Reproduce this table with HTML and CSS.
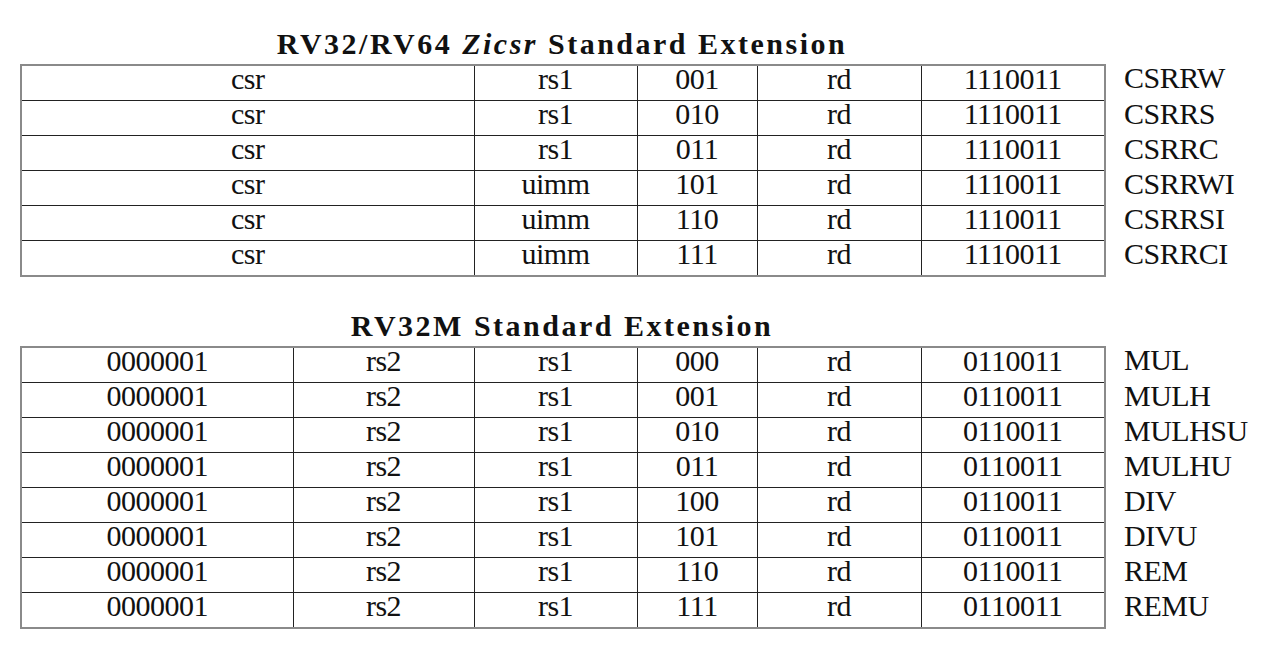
FILE: index.html
```html
<!DOCTYPE html>
<html lang="en">
<head>
  <meta charset="UTF-8" />
  <title>RISC-V Extensions</title>
  <link rel="stylesheet" href="styles.css">
</head>
<body>
  <section class="ext">
    <h2 class="ext-title">RV32/RV64 <i>Zicsr</i> Standard Extension</h2>
    <table class="enc">
      <colgroup>
        <col style="width:453px"><col style="width:163px"><col style="width:120px">
        <col style="width:164px"><col style="width:184px"><col class="name-col">
      </colgroup>
      <tr><td>csr</td><td>rs1</td><td>001</td><td>rd</td><td>1110011</td><td class="name">CSRRW</td></tr>
      <tr><td>csr</td><td>rs1</td><td>010</td><td>rd</td><td>1110011</td><td class="name">CSRRS</td></tr>
      <tr><td>csr</td><td>rs1</td><td>011</td><td>rd</td><td>1110011</td><td class="name">CSRRC</td></tr>
      <tr><td>csr</td><td>uimm</td><td>101</td><td>rd</td><td>1110011</td><td class="name">CSRRWI</td></tr>
      <tr><td>csr</td><td>uimm</td><td>110</td><td>rd</td><td>1110011</td><td class="name">CSRRSI</td></tr>
      <tr class="last"><td>csr</td><td>uimm</td><td>111</td><td>rd</td><td>1110011</td><td class="name">CSRRCI</td></tr>
    </table>
  </section>

  <section class="ext second">
    <h2 class="ext-title">RV32M Standard Extension</h2>
    <table class="enc">
      <colgroup>
        <col style="width:272px"><col style="width:181px"><col style="width:163px"><col style="width:120px">
        <col style="width:164px"><col style="width:184px"><col class="name-col">
      </colgroup>
      <tr><td>0000001</td><td>rs2</td><td>rs1</td><td>000</td><td>rd</td><td>0110011</td><td class="name">MUL</td></tr>
      <tr><td>0000001</td><td>rs2</td><td>rs1</td><td>001</td><td>rd</td><td>0110011</td><td class="name">MULH</td></tr>
      <tr><td>0000001</td><td>rs2</td><td>rs1</td><td>010</td><td>rd</td><td>0110011</td><td class="name">MULHSU</td></tr>
      <tr><td>0000001</td><td>rs2</td><td>rs1</td><td>011</td><td>rd</td><td>0110011</td><td class="name">MULHU</td></tr>
      <tr><td>0000001</td><td>rs2</td><td>rs1</td><td>100</td><td>rd</td><td>0110011</td><td class="name">DIV</td></tr>
      <tr><td>0000001</td><td>rs2</td><td>rs1</td><td>101</td><td>rd</td><td>0110011</td><td class="name">DIVU</td></tr>
      <tr><td>0000001</td><td>rs2</td><td>rs1</td><td>110</td><td>rd</td><td>0110011</td><td class="name">REM</td></tr>
      <tr class="last"><td>0000001</td><td>rs2</td><td>rs1</td><td>111</td><td>rd</td><td>0110011</td><td class="name">REMU</td></tr>
    </table>
  </section>
</body>
</html>
```

FILE: styles.css
```css
/* Pagina */
body {
  margin: 0;
  padding: 28px 0 0 20px;
  background: #fff;
  color: #111;
  font-family: 'Liberation Serif', 'DejaVu Serif', serif;
}

.ext { width: 1247px; }
.ext.second { margin-top: 33px; }

/* Titlu centrat peste tabel */
.ext-title {
  width: 1084px;
  margin: 0 0 5px 0;
  text-align: center;
  font-size: 30px;
  line-height: 31px;
  font-weight: bold;
  letter-spacing: 2.5px;
}
.ext-title i { font-style: italic; }

/* Tabel codificare */
.enc {
  border-collapse: collapse;
  table-layout: fixed;
  font-size: 30px;
  letter-spacing: -0.5px;
  font-family: 'Liberation Serif', 'DejaVu Serif', serif;
}
.enc td {
  height: 34px;
  padding: 0;
  line-height: 26px;
  vertical-align: top;
  text-align: center;
  border: 1px solid #222;
  white-space: nowrap;
}
.enc tr:first-child td { border-top: 2px solid #8a8a8a; }
.enc tr.last td { border-bottom: 2px solid #8a8a8a; }
.enc td:first-child { border-left: 2px solid #8a8a8a; }
.enc td:nth-last-child(2) { border-right: 2px solid #8a8a8a; }

.enc td.name {
  border: none;
  text-align: left;
  padding-left: 18px;
}
.enc tr:first-child td.name,
.enc tr.last td.name { border-top: none; border-bottom: none; }
.name-col { width: 143px; }
```
